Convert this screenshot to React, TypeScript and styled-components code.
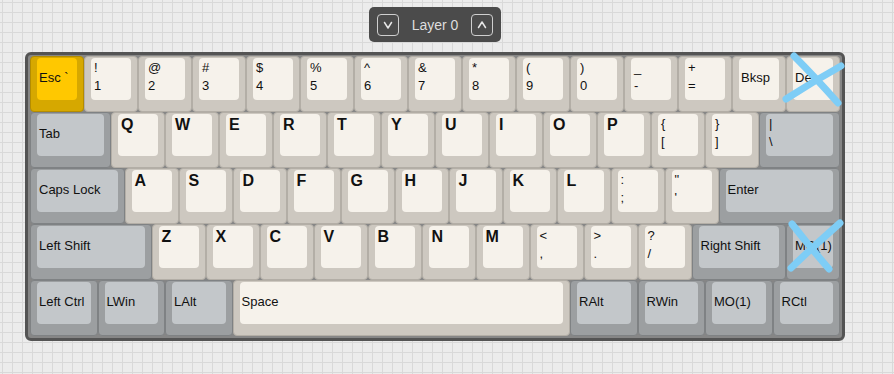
import React from "react";
import styled, { createGlobalStyle } from "styled-components";

const GlobalStyle = createGlobalStyle`
  html, body {
    margin: 0;
    padding: 0;
    height: 100%;
  }
  body {
    font-family: "Liberation Sans", Arial, sans-serif;
    background-color: #ececec;
    background-image:
      linear-gradient(#d9d9d9 1px, transparent 1px),
      linear-gradient(90deg, #d9d9d9 1px, transparent 1px);
    background-size: 10px 10px;
    background-position: 2px 2px;
  }
`;

const Page = styled.div`
  width: 870px;
  padding-top: 7px;
  display: flex;
  flex-direction: column;
  align-items: center;
  gap: 10px;
`;

const LayerBar = styled.div`
  display: flex;
  align-items: center;
  gap: 13px;
  height: 35px;
  padding: 0 8px;
  box-sizing: border-box;
  background: #4b4b4b;
  border-radius: 5px;
  color: #dedede;
  font-size: 14px;
`;

const LayerButton = styled.button`
  width: 22px;
  height: 22px;
  padding: 0;
  display: flex;
  align-items: center;
  justify-content: center;
  background: transparent;
  border: 1.5px solid #cfcfcf;
  border-radius: 4px;
  color: #e6e6e6;
  cursor: pointer;
`;

const LayerTitle = styled.span`
  white-space: nowrap;
`;

const Board = styled.div`
  display: flex;
  flex-direction: column;
  padding: 1px 2px 2px 2px;
  background: #868686;
  border: 3px solid #545454;
  border-radius: 6px;
`;

const Row = styled.div`
  display: flex;
  height: 56px;
`;

type Kind = "alpha" | "mod" | "accent";

const palette: Record<Kind, { border: string; outer: string; top: string }> = {
  alpha: { border: "#b3aea6", outer: "#cdc8c0", top: "#f6f2eb" },
  mod: { border: "#7f8284", outer: "#9c9fa1", top: "#c3c7ca" },
  accent: { border: "#b48c00", outer: "#d6a800", top: "#ffc800" },
};

const KeyCap = styled.div<{ $w: number; $kind: Kind }>`
  position: relative;
  box-sizing: border-box;
  width: ${(p) => p.$w * 54}px;
  height: 56px;
  flex: none;
  padding: 1px 6px 11px 6px;
  display: flex;
  background: ${(p) => palette[p.$kind].outer};
  border: 1px solid ${(p) => palette[p.$kind].border};
  border-radius: 4px;
`;

type Mode = "center" | "alpha" | "dual";

const KeyTop = styled.div<{ $kind: Kind; $mode: Mode }>`
  flex: 1;
  display: flex;
  flex-direction: column;
  justify-content: ${(p) => (p.$mode === "center" ? "center" : "flex-start")};
  padding: ${(p) => (p.$mode === "center" ? "0 2px 4px 2px" : p.$mode === "dual" ? "1px 3px 0 3px" : "1px 3px 0 3px")};
  background: ${(p) => palette[p.$kind].top};
  border-radius: 4px;
  color: #111;
  font-size: ${(p) => (p.$mode === "alpha" ? "16px" : "13px")};
  font-weight: ${(p) => (p.$mode === "alpha" ? 700 : 400)};
  line-height: ${(p) => (p.$mode === "alpha" ? "20px" : p.$mode === "dual" ? "18px" : "15px")};
  white-space: nowrap;
  overflow: hidden;
`;

const Cross = styled.svg`
  position: absolute;
  left: 0;
  top: 0;
  width: 54px;
  height: 56px;
  overflow: visible;
  pointer-events: none;
`;

type KeyDef = {
  l: string[];
  w?: number;
  k?: Kind;
  x?: "a" | "b";
};

const A = (s: string): KeyDef => ({ l: [s] });
const D = (t: string, b: string): KeyDef => ({ l: [t, b] });
const M = (s: string, w = 1, x?: "a" | "b"): KeyDef => ({ l: [s], w, k: "mod", x });

const rows: KeyDef[][] = [
  [
    { l: ["Esc `"], k: "accent" },
    D("!", "1"), D("@", "2"), D("#", "3"), D("$", "4"), D("%", "5"),
    D("^", "6"), D("&", "7"), D("*", "8"), D("(", "9"), D(")", "0"),
    D("_", "-"), D("+", "="),
    { l: ["Bksp"] },
    { l: ["Del"], x: "a" },
  ],
  [
    M("Tab", 1.5),
    A("Q"), A("W"), A("E"), A("R"), A("T"), A("Y"), A("U"), A("I"), A("O"), A("P"),
    D("{", "["), D("}", "]"),
    { l: ["|", "\\"], w: 1.5, k: "mod" },
  ],
  [
    M("Caps Lock", 1.75),
    A("A"), A("S"), A("D"), A("F"), A("G"), A("H"), A("J"), A("K"), A("L"),
    D(":", ";"), D("\"", "'"),
    M("Enter", 2.25),
  ],
  [
    M("Left Shift", 2.25),
    A("Z"), A("X"), A("C"), A("V"), A("B"), A("N"), A("M"),
    D("<", ","), D(">", "."), D("?", "/"),
    M("Right Shift", 1.75),
    M("MO(1)", 1, "b"),
  ],
  [
    M("Left Ctrl", 1.25), M("LWin", 1.25), M("LAlt", 1.25),
    { l: ["Space"], w: 6.25 },
    M("RAlt", 1.25), M("RWin", 1.25), M("MO(1)", 1.25), M("RCtl", 1.25),
  ],
];

const crosses = {
  a: ["M7 -1 Q28 20 51 46", "M54 9 Q27 24 -1 42"],
  b: ["M5 -1 Q23 22 42 44", "M53 -2 Q28 20 4 43"],
};

function modeOf(k: KeyDef): Mode {
  if (k.l.length === 2) return "dual";
  const kind = k.k ?? "alpha";
  if (kind === "alpha" && k.l[0].length === 1) return "alpha";
  return "center";
}

function Key({ def }: { def: KeyDef }) {
  const kind = def.k ?? "alpha";
  const mode = modeOf(def);
  return (
    <KeyCap $w={def.w ?? 1} $kind={kind}>
      <KeyTop $kind={kind} $mode={mode}>
        {def.l.map((s, i) => (
          <span key={i}>{s}</span>
        ))}
      </KeyTop>
      {def.x && (
        <Cross viewBox="0 0 54 56">
          {crosses[def.x].map((d, i) => (
            <path
              key={i}
              d={d}
              fill="none"
              stroke="#7ecdf6"
              strokeWidth={7}
              strokeLinecap="round"
            />
          ))}
        </Cross>
      )}
    </KeyCap>
  );
}

function Chevron({ up }: { up?: boolean }) {
  return (
    <svg width="12" height="12" viewBox="0 0 12 12">
      <path
        d={up ? "M2.5 8.5 L6 3 L9.5 8.5" : "M2.5 3.5 L6 9 L9.5 3.5"}
        fill="none"
        stroke="#e6e6e6"
        strokeWidth={1.5}
        strokeLinecap="round"
        strokeLinejoin="round"
      />
    </svg>
  );
}

export default function App() {
  return (
    <>
      <GlobalStyle />
      <Page>
        <LayerBar>
          <LayerButton aria-label="Previous layer">
            <Chevron />
          </LayerButton>
          <LayerTitle>Layer 0</LayerTitle>
          <LayerButton aria-label="Next layer">
            <Chevron up />
          </LayerButton>
        </LayerBar>
        <Board>
          {rows.map((r, i) => (
            <Row key={i}>
              {r.map((k, j) => (
                <Key key={j} def={k} />
              ))}
            </Row>
          ))}
        </Board>
      </Page>
    </>
  );
}
